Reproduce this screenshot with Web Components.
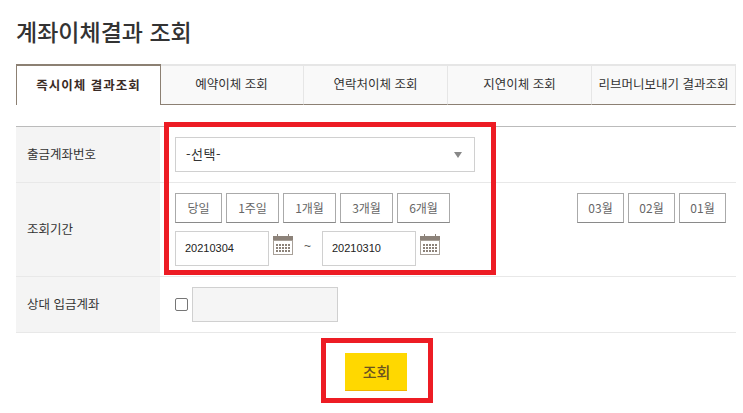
<!DOCTYPE html>
<html lang="ko">
<head>
<meta charset="utf-8">
<title>계좌이체결과 조회</title>
<style>
  html, body { margin: 0; background: #fff; }
  body { font-family: "Noto Sans CJK KR", "Noto Sans", sans-serif; }
</style>
</head>
<body>
<transfer-page></transfer-page>
<script>
class TabBar extends HTMLElement {
  constructor() {
    super();
    const shadowRoot = this.attachShadow({ mode: 'open' });
    shadowRoot.innerHTML = `
      <style>
        :host { display: grid; grid-template-columns: repeat(5, 144px); height: 41px; }
      </style>
      <slot></slot>`;
  }
}

class TabItem extends HTMLElement {
  constructor() {
    super();
    const shadowRoot = this.attachShadow({ mode: 'open' });
    shadowRoot.innerHTML = `
      <style>
        :host {
          display: flex;
          align-items: center;
          justify-content: center;
          box-sizing: border-box;
          background: #f9f9f9;
          border-top: 2px solid #e6e6e6;
          border-right: 1px solid #e6e6e6;
          border-bottom: 1px solid #8c8073;
          font-size: 12.5px;
          line-height: 16px;
          padding-bottom: 2px;
          color: #333;
          white-space: nowrap;
        }
        :host([active]) {
          background: #fff;
          border: 1px solid #8c8073;
          border-top-width: 2px;
          border-bottom: 0;
          margin-right: -1px;
          z-index: 1;
          font-weight: 700;
          letter-spacing: 1px;
          color: #3a2a25;
        }
      </style>
      <slot></slot>`;
  }
}

class FormRow extends HTMLElement {
  constructor() {
    super();
    const shadowRoot = this.attachShadow({ mode: 'open' });
    shadowRoot.innerHTML = `
      <style>
        :host { display: flex; border-bottom: 1px solid #e8e8e8; box-sizing: border-box; }
        .label {
          width: 144px;
          flex: none;
          box-sizing: border-box;
          padding: 0 0 3px 11px;
          display: flex;
          align-items: center;
          background: #f4f4f4;
          font-size: 12.5px;
          color: #333;
        }
        .body { flex: 1; padding: 10px 10px 10px 15px; min-width: 0; }
      </style>
      <div class="label"><slot name="label"></slot></div>
      <div class="body"><slot></slot></div>`;
  }
}

class RangeButton extends HTMLElement {
  constructor() {
    super();
    const shadowRoot = this.attachShadow({ mode: 'open' });
    shadowRoot.innerHTML = `
      <style>
        :host {
          display: flex;
          align-items: center;
          justify-content: center;
          box-sizing: border-box;
          width: 47px;
          height: 30px;
          padding-bottom: 2px;
          border: 1px solid #aaa;
          border-bottom-color: #8a8a8a;
          background: #fff;
          font-size: 12px;
          color: #666;
        }
        :host([wide]) { width: 53px; }
      </style>
      <slot></slot>`;
  }
}

class DateField extends HTMLElement {
  constructor() {
    super();
    const shadowRoot = this.attachShadow({ mode: 'open' });
    shadowRoot.innerHTML = `
      <style>
        :host { display: flex; align-items: flex-start; }
        .box {
          box-sizing: border-box;
          width: 94px;
          height: 35px;
          padding: 0 0 1px 9px;
          display: flex;
          align-items: center;
          border: 1px solid #d0d0d0;
          font: 11px "Liberation Sans", sans-serif;
          color: #222;
        }
        svg { display: block; margin: 3px 0 0 4px; }
      </style>
      <div class="box"><slot></slot></div>
      <svg width="20" height="21" viewBox="0 0 20 21">
        <g fill="#8c8279">
          <rect x="4" y="0" width="1" height="3"/>
          <rect x="15" y="0" width="1" height="3"/>
          <rect x="0" y="2" width="20" height="5"/>
          <path d="M3 10h2v2H3zM6 10h2v2H6zM9 10h2v2H9zM12 10h2v2h-2zM15 10h2v2h-2zM3 13h2v2H3zM6 13h2v2H6zM9 13h2v2H9zM12 13h2v2h-2zM15 13h2v2h-2zM3 16h2v2H3zM6 16h2v2H6zM9 16h2v2H9zM12 16h2v2h-2zM15 16h2v2h-2z"/>
        </g>
        <rect x=".5" y="6.5" width="19" height="14" fill="none" stroke="#a8a098"/>
      </svg>`;
  }
}

class SearchButton extends HTMLElement {
  constructor() {
    super();
    const shadowRoot = this.attachShadow({ mode: 'open' });
    shadowRoot.innerHTML = `
      <style>
        :host {
          display: flex;
          align-items: center;
          justify-content: center;
          box-sizing: border-box;
          width: 62px;
          height: 38px;
          padding: 0 0 0 2px;
          background: #ffd800;
          border-bottom: 1px solid #f0b400;
          font-size: 15px;
          font-weight: 500;
          color: #6b5320;
        }
      </style>
      <slot></slot>`;
  }
}

class MarkBox extends HTMLElement {
  constructor() {
    super();
    const shadowRoot = this.attachShadow({ mode: 'open' });
    shadowRoot.innerHTML = `
      <style>
        :host { position: absolute; box-sizing: border-box; border: 5px solid #ed1c24; pointer-events: none; }
      </style>`;
  }
}

class TransferPage extends HTMLElement {
  constructor() {
    super();
    const shadowRoot = this.attachShadow({ mode: 'open' });
    const template = document.createElement('template');
    template.innerHTML = `
      <style>
        :host { display: block; position: relative; height: 413px; overflow: hidden; padding: 0 7px 0 16px; box-sizing: border-box; }
        h1 { margin: 0; height: 64px; box-sizing: border-box; padding-top: 14px; font-size: 23px; line-height: 34px; font-weight: 500; color: #333; white-space: nowrap; }
        .table { margin-top: 21px; border-top: 1px solid #bbb; }
        .row-1 { height: 56px; }
        .row-2 { height: 94px; }
        .row-3 { height: 56px; }
        .select {
          box-sizing: border-box;
          width: 300px;
          height: 35px;
          padding: 0 12px 2px 10px;
          display: flex;
          align-items: center;
          justify-content: space-between;
          border: 1px solid #d0d0d0;
          font-size: 13px;
          letter-spacing: .5px;
          color: #333;
        }
        .arrow { width: 0; height: 0; margin-top: 2px; border: 4px solid transparent; border-top: 6px solid #888; border-bottom: 0; }
        .btns { display: flex; gap: 4px; }
        .btns .months { display: flex; gap: 4px; margin-left: auto; }
        .dates { display: flex; align-items: flex-start; margin-top: 8px; }
        .tilde { width: 29px; text-align: center; padding-top: 8px; font: 12px "Liberation Sans", sans-serif; color: #555; }
        .account { display: flex; align-items: flex-start; gap: 4px; }
        .check { box-sizing: border-box; width: 13px; height: 13px; margin-top: 11px; border: 1px solid #767676; border-radius: 2px; background: #fff; }
        .readonly { box-sizing: border-box; width: 146px; height: 35px; border: 1px solid #d0d0d0; background: #f5f5f5; }
        .actions { display: flex; justify-content: center; margin-top: 20px; margin-left: -1px; }
        mark-box.a { left: 164px; top: 122px; width: 332px; height: 153px; }
        mark-box.b { left: 321px; top: 338px; width: 112px; height: 65px; }
      </style>
      <h1>계좌이체결과 조회</h1>
      <tab-bar>
        <tab-item active>즉시이체 결과조회</tab-item>
        <tab-item>예약이체 조회</tab-item>
        <tab-item>연락처이체 조회</tab-item>
        <tab-item>지연이체 조회</tab-item>
        <tab-item>리브머니보내기 결과조회</tab-item>
      </tab-bar>
      <div class="table">
        <form-row class="row-1">
          <span slot="label">출금계좌번호</span>
          <div class="select"><span>-선택-</span><i class="arrow"></i></div>
        </form-row>
        <form-row class="row-2">
          <span slot="label">조회기간</span>
          <div class="btns">
            <range-button>당일</range-button>
            <range-button wide>1주일</range-button>
            <range-button wide>1개월</range-button>
            <range-button wide>3개월</range-button>
            <range-button wide>6개월</range-button>
            <div class="months">
              <range-button>03월</range-button>
              <range-button>02월</range-button>
              <range-button>01월</range-button>
            </div>
          </div>
          <div class="dates">
            <date-field>20210304</date-field>
            <span class="tilde">~</span>
            <date-field>20210310</date-field>
          </div>
        </form-row>
        <form-row class="row-3">
          <span slot="label">상대 입금계좌</span>
          <div class="account"><span class="check"></span><span class="readonly"></span></div>
        </form-row>
      </div>
      <div class="actions"><search-button>조회</search-button></div>
      <mark-box class="a"></mark-box>
      <mark-box class="b"></mark-box>`;
    shadowRoot.appendChild(template.content.cloneNode(true));
  }
}

customElements.define('tab-bar', TabBar);
customElements.define('tab-item', TabItem);
customElements.define('form-row', FormRow);
customElements.define('range-button', RangeButton);
customElements.define('date-field', DateField);
customElements.define('search-button', SearchButton);
customElements.define('mark-box', MarkBox);
customElements.define('transfer-page', TransferPage);
</script>
</body>
</html>
